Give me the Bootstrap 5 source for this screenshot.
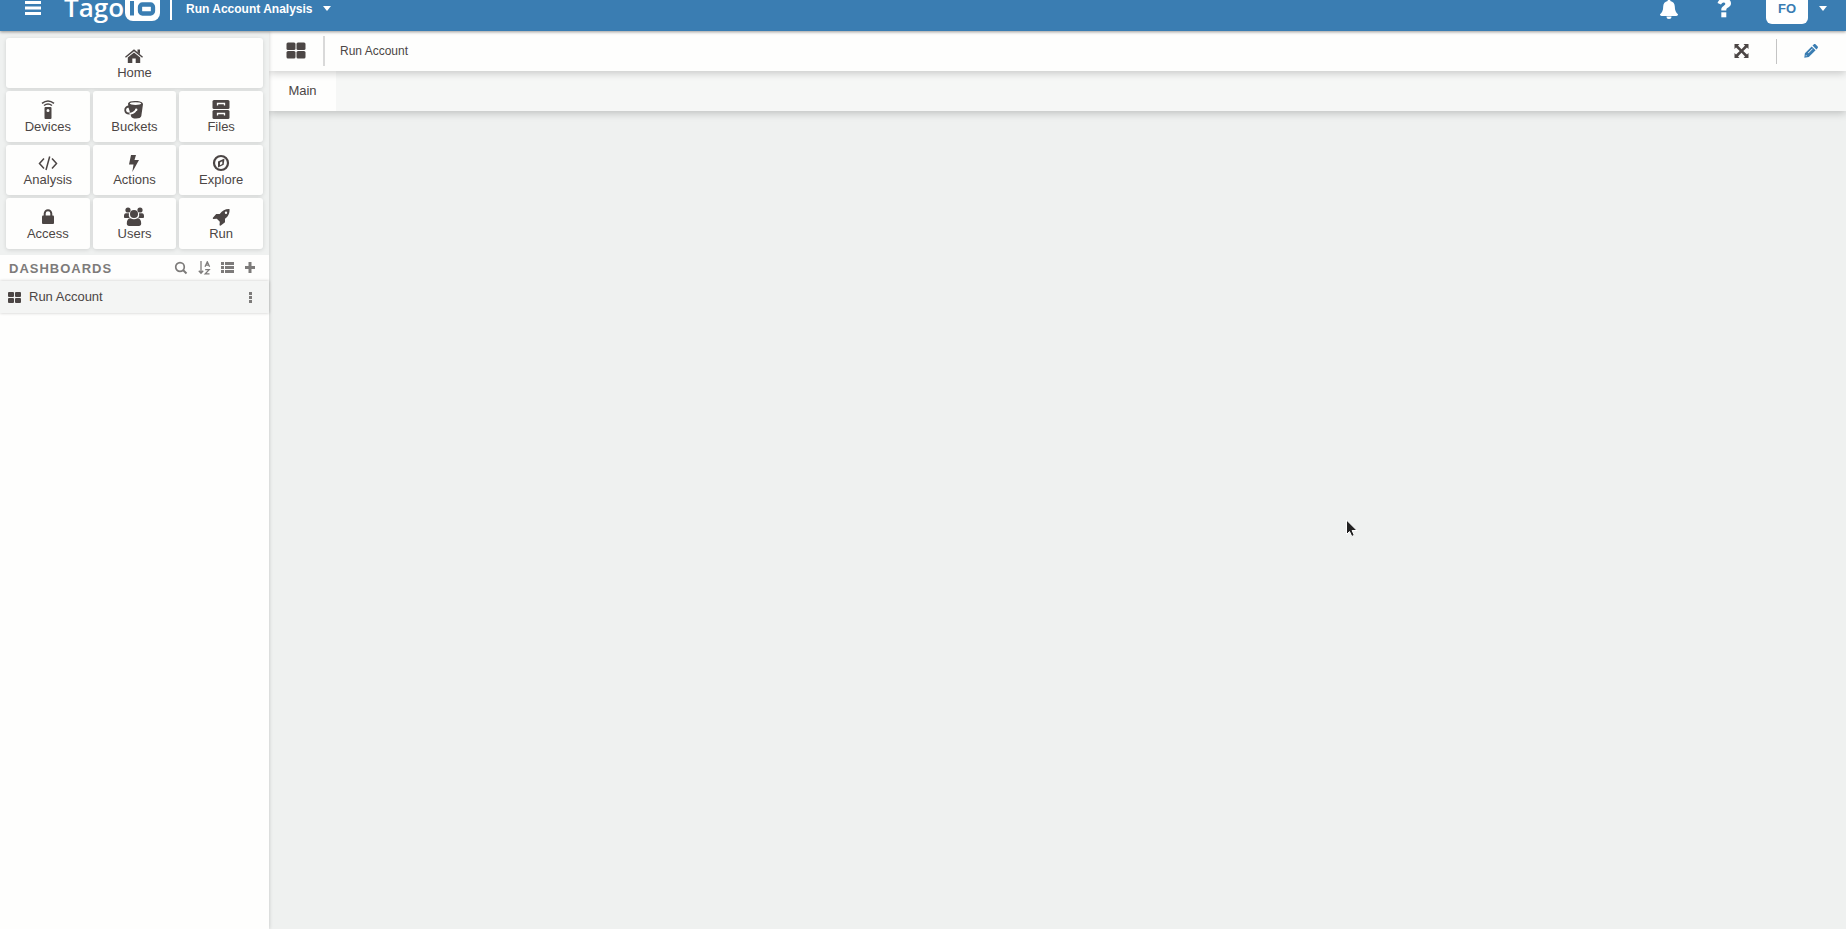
<!DOCTYPE html>
<html lang="en">
<head>
<meta charset="utf-8">
<meta name="viewport" content="width=device-width, initial-scale=1">
<title>TagoIO - Run Account</title>
<link href="https://cdn.jsdelivr.net/npm/bootstrap@5.3.0/dist/css/bootstrap.min.css" rel="stylesheet">
<script src="https://cdn.jsdelivr.net/npm/bootstrap@5.3.0/dist/js/bootstrap.bundle.min.js" defer></script>
<style>
  body { font-family: "Liberation Sans", Arial, sans-serif; font-size: 13px; line-height: 16px; color: #4c4645; background: #eff1f0; }
  svg { display: block; fill: currentColor; flex-shrink: 0; }
  .plain { background: none; border: 0; padding: 0; color: inherit; }
  .topbar { background: #3a7db2; color: #fff; height: 31px; padding: 0 19px 14px 24px; z-index: 3; box-shadow: 0 1px 3px rgba(0,0,0,.4); clip-path: inset(0 0 -6px 0); }
  .brandname { margin-left: 23px; padding-bottom: 4px; gap: 1px; color: #fff; font-family: "Open Sans", sans-serif; font-weight: 600; font-size: 26px; line-height: 32px; }
  .vline { width: 2px; height: 22px; background: #fff; margin-left: 10px; }
  .account { font-size: 12px; font-weight: 700; margin-left: 14px; gap: 10px; }
  .tools { gap: 35px; }
  .user { gap: 11px; }
  .avatar { width: 42px; height: 30px; border-radius: 6px; background: #fff; color: #3a7db2; font-size: 13px; font-weight: 700; }
  .sidebar { width: 269px; background: #fefefd; box-shadow: 0 0 4px rgba(0,0,0,.2); z-index: 2; }
  .tiles { display: grid; grid-template-columns: repeat(3, 1fr); grid-template-rows: 50px repeat(3, 1fr); gap: 3px; height: 224px; padding: 7px 6px 6px; background: #eff1f0; }
  .tile { background: #fefefd; border-radius: 3px; box-shadow: 0 1px 4px rgba(0,0,0,.13); color: inherit; padding-bottom: 7px; }
  .tile.wide { grid-column: 1 / -1; }
  .listhead { height: 26px; padding: 0 13px 0 9px; color: #7d7b7a; }
  .listhead h2 { font-size: 13px; line-height: 16px; font-weight: 700; letter-spacing: 1px; padding-top: 2px; }
  .listtools { gap: 10px; }
  .dash { height: 32px; padding: 0 17px 0 8px; background: #f4f5f4; box-shadow: 0 0 3px rgba(0,0,0,.22); }
  .dash a { gap: 8px; color: inherit; }
  .dash button { color: #7d7b7a; }
  .titlebar { height: 40px; background: #fefefd; padding: 0 28px 0 17px; z-index: 1; box-shadow: 0 2px 8px rgba(0,0,0,.2); }
  .titlebar h1 { font-size: 12px; line-height: 16px; font-weight: 400; }
  .sep { width: 1px; height: 25px; background: #c4c4c4; }
  .sep.thick { width: 2px; height: 30px; background: #d9d9d9; margin: 0 15px 0 17px; }
  .titletools { gap: 27px; }
  .edit { color: #3a7db2; }
  .tabs { height: 40px; background: #f6f7f6; box-shadow: 0 2px 8px rgba(0,0,0,.22); }
  .maintab { width: 67px; background: #fefefd; color: inherit; }
  .pointer { position: absolute; left: 1345px; top: 519px; z-index: 9; }
</style>
</head>
<body class="d-flex flex-column vh-100 overflow-hidden">
<header class="topbar d-flex align-items-center position-relative flex-shrink-0">
  <button class="plain" aria-label="Menu"><svg width="17" height="16" viewBox="0 0 17 16"><path d="M1 0h16v3H1zM1 5.500h16v3H1zM1 11h16v3H1z"/></svg></button>
  <a class="brandname d-flex align-items-center text-decoration-none" href="#">Tago
    <svg width="35" height="33" viewBox="0 0 35 33"><rect y="-4" width="35" height="35" rx="8"/><path fill="#3a7db2" d="M5 11h4v14.500H5z"/><rect x="15" y="14.500" width="13" height="9" rx="2.500" fill="none" stroke="#3a7db2" stroke-width="4.300"/></svg>
  </a>
  <span class="vline"></span>
  <button class="plain account d-flex align-items-center">Run Account Analysis <svg width="8" height="5" viewBox="0 0 8 5"><path d="M0 0h8L4 5z"/></svg></button>
  <div class="tools d-flex align-items-center ms-auto">
    <button class="plain" aria-label="Notifications"><svg width="18" height="20" viewBox="1 0 18 20"><path d="M10 20a2.500 2.500 0 0 0 2.500-2.500h-5A2.500 2.500 0 0 0 10 20zM11.300 2V1.200a1.300 1.300 0 0 0-2.600 0V2C6 2.500 4.200 4.500 4.200 7.500c0 4-1.200 6-3.200 7.800 0 1 .7 1.700 1.700 1.700h14.600c1 0 1.700-.7 1.700-1.700-2-1.800-3.200-3.800-3.200-7.800 0-3-1.800-5-4.500-5.500z"/></svg></button>
    <button class="plain" aria-label="Help"><svg width="18" height="20" viewBox="-4 1 18 20"><path d="M.5 5C2 1.500 4 0 7.300 0 11 0 14 2 14 5.600c0 3.900-4.700 4-4.700 6.100v.8h-5v-1.200c0-3.200 4-3.700 4-5.400 0-1-.8-1.500-1.700-1.500-1.100 0-1.800.9-2.600 2.100z"/><path d="M4.300 14.300h5v5h-5z"/></svg></button>
    <div class="user d-flex align-items-center">
      <button class="plain avatar">FO</button>
      <button class="plain" aria-label="Account menu"><svg width="8" height="5" viewBox="0 0 8 5"><path d="M0 0h8L4 5z"/></svg></button>
    </div>
  </div>
</header>
<div class="d-flex flex-grow-1">
  <aside class="sidebar position-relative flex-shrink-0">
    <nav class="tiles">
      <a href="#" class="tile wide d-flex flex-column align-items-center justify-content-end text-decoration-none"><svg width="18" height="18" viewBox="0 0 18 18"><path d="M9 2.200 18 9.800l-.9 1L9 4.300.9 10.800l-.9-1zM12.500 2.500H15v4.600l-2.500-2zM9 5.500l6.200 5V16h-4.500v-4.500H7.300V16H2.800v-5.500z"/></svg>Home</a>
      <a href="#" class="tile d-flex flex-column align-items-center justify-content-end text-decoration-none"><svg width="14" height="19" viewBox="0 0 14 19"><path d="M5 7h4.500a1 1 0 0 1 1 1v10a1 1 0 0 1-1 1h-5a1 1 0 0 1-1-1V8a1 1 0 0 1 1-1zm2 2a1.500 1.500 0 1 0 0 3 1.500 1.500 0 0 0 0-3z" fill-rule="evenodd"/><path d="M1 3.300Q7-1.500 13 3.300M3 5.500q4-3 8 0" fill="none" stroke="currentColor" stroke-width="1.500"/></svg>Devices</a>
      <a href="#" class="tile d-flex flex-column align-items-center justify-content-end text-decoration-none"><svg width="20" height="19" viewBox="0 0 20 19"><path d="M4 3.500C4.500 1.500 8 .8 12 1s7 1.200 7 3.200L17.300 16c-.3 1.700-2.500 2.500-5.300 2.500-2.600 0-4.500-.9-5-2.300l-.4-2-2.200-7z"/><path d="M5.200 6.500C2.500 6.500 1 8.200 1.200 10.300c.2 2 2 3.400 4.800 3.200" fill="none" stroke="currentColor" stroke-width="1.800"/><path d="M5.500 13.700c3-.2 5-1.200 6.500-3.700" fill="none" stroke="#fefefd" stroke-width="1.600"/><circle cx="12.200" cy="9.800" r="1.200" fill="#fefefd"/><ellipse cx="11.500" cy="3.600" rx="5.700" ry="1.400" fill="#fefefd"/></svg>Buckets</a>
      <a href="#" class="tile d-flex flex-column align-items-center justify-content-end text-decoration-none"><svg width="18" height="19" viewBox="0 0 18 19"><rect x=".5" width="17" height="9" rx="1.500"/><rect x=".5" y="10" width="17" height="9" rx="1.500"/><path d="M5.500 5.500v-2h7v2M5.500 15.500v-2h7v2" fill="none" stroke="#fefefd" stroke-width="1.300"/></svg>Files</a>
      <a href="#" class="tile d-flex flex-column align-items-center justify-content-end text-decoration-none"><svg width="20" height="18" viewBox="0 0 20 18"><path d="M6 4.500 1.500 9.500 6 14.500M14 4.500l4.500 5-4.500 5M11.700 2.500 8 16" fill="none" stroke="currentColor" stroke-width="1.500"/></svg>Analysis</a>
      <a href="#" class="tile d-flex flex-column align-items-center justify-content-end text-decoration-none"><svg width="12" height="18" viewBox="0 0 12 18"><path d="M3 1h5L6.500 6H11L4.300 18l1.200-7.500H1z"/></svg>Actions</a>
      <a href="#" class="tile d-flex flex-column align-items-center justify-content-end text-decoration-none"><svg width="18" height="18" viewBox="0 0 18 18"><circle cx="9" cy="9" r="7" fill="none" stroke="currentColor" stroke-width="2.200"/><path fill-rule="evenodd" d="m12.500 4.500-.8 6.200-5.700 2.800V7.500zM8 8.500v2.800l2.300-1.200V7.300z"/></svg>Explore</a>
      <a href="#" class="tile d-flex flex-column align-items-center justify-content-end text-decoration-none"><svg width="14" height="18" viewBox="0 0 14 18"><rect x="1" y="7.500" width="12" height="8.500" rx="1"/><path d="M3.700 8V5.500a3.300 3.300 0 0 1 6.600 0V8" fill="none" stroke="currentColor" stroke-width="2"/></svg>Access</a>
      <a href="#" class="tile d-flex flex-column align-items-center justify-content-end text-decoration-none"><svg width="20" height="19" viewBox="0 0 20 19"><circle cx="4" cy="3" r="2.600"/><circle cx="16" cy="3" r="2.600"/><circle cx="10" cy="7" r="4"/><path d="M5 6.300H2C.6 6.300 0 7.500 0 9v1c0 .8.5 1 1.300 1h4.500A5.500 5.500 0 0 1 5 6.300zM15 6.300h3c1.400 0 2 1.200 2 2.700v1c0 .8-.5 1-1.300 1h-4.500a5.500 5.500 0 0 0 .8-4.700zM6.500 11.300c2 1.400 5 1.400 7 0 2.500 0 3.700 2 3.700 5.200 0 1.500-.8 2.500-2.300 2.500H5.100c-1.500 0-2.300-1-2.300-2.500 0-3.200 1.200-5.200 3.700-5.200z"/></svg>Users</a>
      <a href="#" class="tile d-flex flex-column align-items-center justify-content-end text-decoration-none"><svg width="18" height="18" viewBox="0 0 18 18"><path fill-rule="evenodd" d="M17.500 1c.3 4-.8 7-4.500 9.800v3.400L8.500 17.700l-1-.5.3-3.500L4.800 10.700l-3.700.2-.4-.9L4.200 6h3.500C10.500 2.300 13.500.8 17.500 1zM14 3.500a1.200 1.200 0 1 0 0 2.400 1.200 1.200 0 0 0 0-2.400z"/></svg>Run</a>
    </nav>
    <div class="listhead d-flex align-items-center justify-content-between">
      <h2 class="mb-0">DASHBOARDS</h2>
      <div class="listtools d-flex align-items-center">
        <button class="plain" aria-label="Search"><svg width="14" height="14" viewBox="0 0 14 14"><path d="m9 9 3.500 3.500" stroke="currentColor" stroke-width="2"/><circle cx="6" cy="6" r="4.300" fill="none" stroke="currentColor" stroke-width="1.700"/></svg></button>
        <button class="plain" aria-label="Sort"><svg width="13" height="14" viewBox="0 0 13 14"><path d="M3 0v12M.8 9.800 3 12.300l2.200-2.500M7 5.800 9.300.8l2.300 5M7.900 4.200h2.800M7.200 8.600h4L7.200 12.900h4.300" fill="none" stroke="currentColor" stroke-width="1.300"/></svg></button>
        <button class="plain" aria-label="List view"><svg width="13" height="14" viewBox="0 0 13 14"><path d="M0 1h3v3H0zM4 1h9v3H4zM0 5h3v3H0zM4 5h9v3H4zM0 9h3v3H0zM4 9h9v3H4z"/></svg></button>
        <button class="plain" aria-label="Add dashboard"><svg width="12" height="14" viewBox="0 0 12 14"><path d="M4.500 1h3v4H11v3H7.500v4h-3V8H1V5h3.500z"/></svg></button>
      </div>
    </div>
    <div class="dash d-flex align-items-center justify-content-between">
      <a href="#" class="d-flex align-items-center text-decoration-none"><svg width="13" height="11" viewBox="0 0 13 11"><rect width="6" height="5" rx="1"/><rect x="7" width="6" height="5" rx="1"/><rect y="6" width="6" height="5" rx="1"/><rect x="7" y="6" width="6" height="5" rx="1"/></svg>Run Account</a>
      <button class="plain" aria-label="More"><svg width="3" height="11" viewBox="0 0 3 11"><path d="M0 0h3v3H0zM0 4h3v3H0zM0 8h3v3H0z"/></svg></button>
    </div>
  </aside>
  <main class="flex-grow-1">
    <div class="titlebar d-flex align-items-center position-relative">
      <svg width="20" height="18" viewBox="0 0 20 18"><rect x=".5" y=".5" width="9" height="7.500" rx="1.500"/><rect x="10.500" y=".5" width="9" height="7.500" rx="1.500"/><rect x=".5" y="9" width="9" height="7.500" rx="1.500"/><rect x="10.500" y="9" width="9" height="7.500" rx="1.500"/></svg>
      <span class="sep thick"></span>
      <h1 class="mb-0">Run Account</h1>
      <div class="titletools d-flex align-items-center ms-auto">
        <button class="plain" aria-label="Full screen"><svg width="15" height="14" viewBox="0 0 15 14"><path d="M.5 0h5L4 1.500l3.500 3.700L11 1.500 9.500 0h5v5L13 3.500 9.300 7l3.700 3.500L14.500 9v5h-5l1.500-1.500-3.500-3.700L4 12.500 5.500 14h-5V9L2 10.500 5.700 7 2 3.500.5 5z"/></svg></button>
        <span class="sep"></span>
        <button class="plain edit" aria-label="Edit"><svg width="14" height="14" viewBox="0 0 14 14"><path fill-rule="evenodd" d="M.3 13.700.9 9.200 7.700 2.400l3.900 3.900-6.800 6.800zM1.900 11l-.2 1.300 1.300-.2zM4 8.700l.5.5 4.200-4.200-.5-.5zM8.500 1.600 9.700.5c.6-.6 1.400-.6 2 0l1.800 1.800c.6.6.6 1.400 0 2l-1.100 1.200z"/></svg></button>
      </div>
    </div>
    <div class="tabs d-flex">
      <a href="#" class="maintab d-flex align-items-center justify-content-center text-decoration-none">Main</a>
    </div>
  </main>
</div>
<svg class="pointer" width="13" height="20" viewBox="0 0 13 20"><path d="M1.500 1v14.500l3-3 2.300 5 2.500-1.200-2.200-4.800H12z" fill="#222" stroke="#fff" stroke-width="1"/></svg>
</body></html>
